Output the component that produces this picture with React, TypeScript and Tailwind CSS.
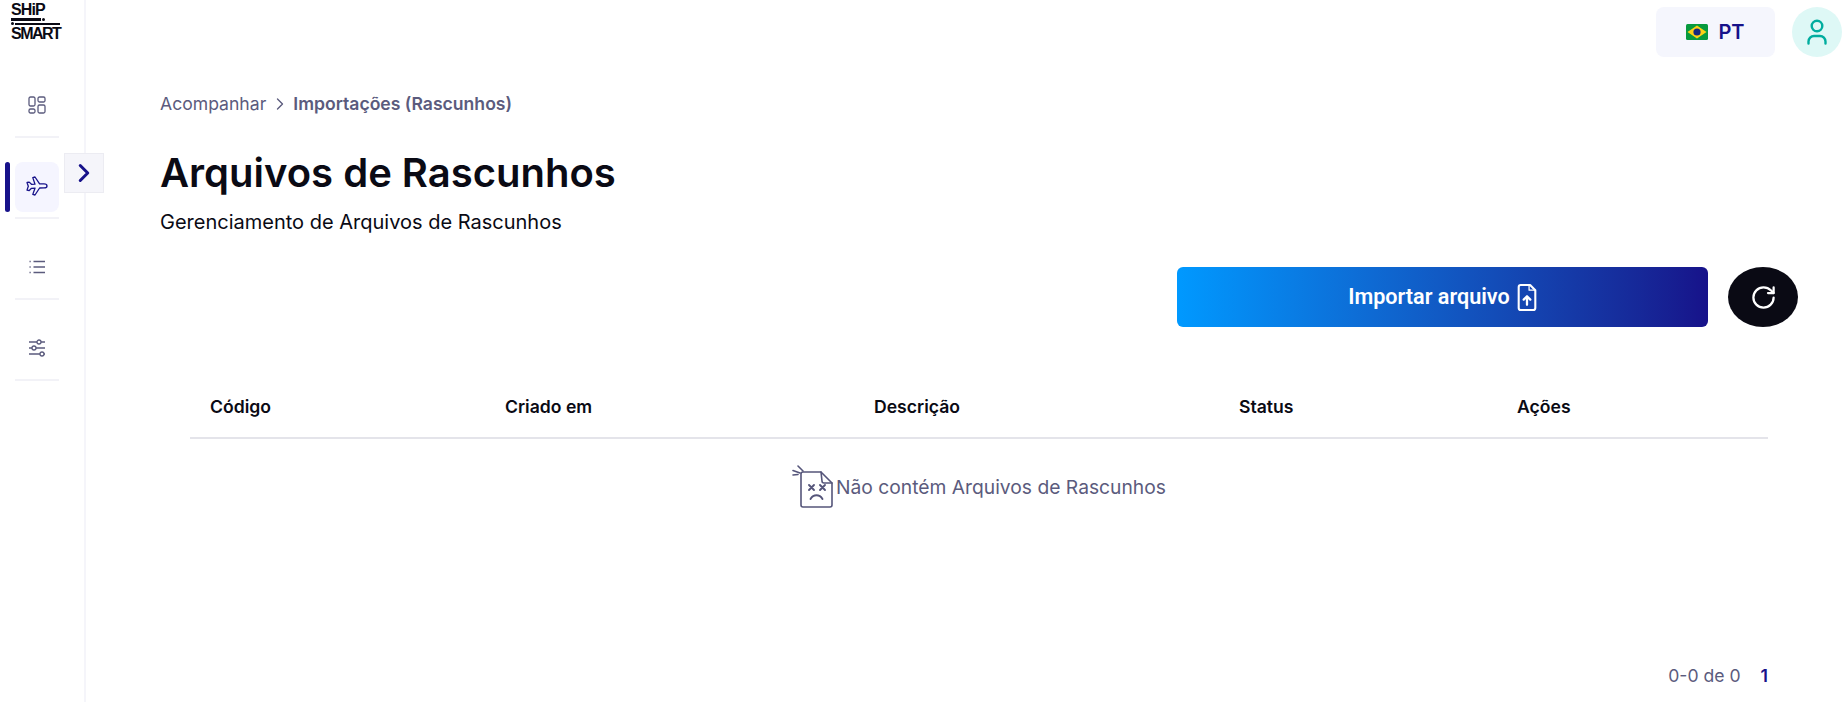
import { ChevronRight, RotateCw } from "lucide-react";

const FONT = { fontFamily: "Inter, sans-serif" };

const COLUMNS = ["Código", "Criado em", "Descrição", "Status", "Ações"];

function Logo() {
  return (
    <div className="flex h-[36px] w-[50px] flex-col font-['Liberation_Sans'] font-bold leading-none text-[#0a0a14]">
      <span className="h-[13px] text-[16px] leading-[13px] tracking-[-0.9px]">SHiP</span>
      <div className="mt-[2px] flex items-center gap-[1px]">
        <div className="h-[3px] w-[30px] bg-[#0a0a14]" />
        <div className="h-[3px] w-[3px] rounded-full bg-[#0a0a14]" />
      </div>
      <div className="mt-[1px] flex items-center gap-[1px]">
        <div className="h-[3px] w-[3px] rounded-full bg-[#0a0a14]" />
        <div className="h-[2px] w-[45px] bg-[#0a0a14]" />
      </div>
      <span className="mt-[2px] h-[13px] text-[16px] leading-[13px] tracking-[-1.5px]">SMART</span>
    </div>
  );
}

function GridIcon() {
  return (
    <svg width="18" height="18" viewBox="0 0 18 18" fill="none" stroke="#5b5b7d" strokeWidth="1.3">
      <rect x="1" y="1" width="6" height="9" rx="1.5" />
      <rect x="10" y="1" width="7" height="5" rx="1.5" />
      <rect x="1" y="13" width="6" height="4" rx="1.5" />
      <rect x="10" y="9" width="7" height="8" rx="1.5" />
    </svg>
  );
}

function PlaneIcon() {
  return (
    <svg width="22" height="20" viewBox="0 0 22 20" fill="none" stroke="#17128a" strokeWidth="1.3" strokeLinejoin="round">
      <path d="M1 6.500l2.200-.4 2.300 2.200 3.500-.1L6.800 1.600 9 1l4.600 6.900 4.400-.1c1.800 0 3 1 3 2.100s-1.200 2-3 2l-4.400.1L9 19l-2.200-.6 2.200-6.200-3.500.1-2.300 2.200-2.200-.4 1.300-3.900z" />
    </svg>
  );
}

function ListIcon() {
  return (
    <svg width="16" height="14" viewBox="0 0 16 14" fill="none" stroke="#5b5b7d" strokeWidth="1.4">
      <path d="M4.500 1.500H16M4.500 7H16M4.500 12.500H16" />
      <path d="M0.500 1.500h1.200M0.500 7h1.200M0.500 12.500h1.200" />
    </svg>
  );
}

function SlidersIcon() {
  return (
    <svg width="18" height="18" viewBox="0 0 18 18" fill="none" stroke="#5b5b7d" strokeWidth="1.3">
      <path d="M1 3h8M13 3h4M1 9h3M8 9h9M1 15h11M16 15h1" />
      <circle cx="11" cy="3" r="2" />
      <circle cx="6" cy="9" r="2" />
      <circle cx="14" cy="15" r="2" />
    </svg>
  );
}

function BrazilFlag() {
  return (
    <svg width="22" height="16" viewBox="0 0 22 16">
      <rect width="22" height="16" rx="1.500" fill="#079a3e" />
      <path d="M11 1.500L20.500 8 11 14.500 1.500 8z" fill="#fcd116" />
      <circle cx="11" cy="8" r="3.600" fill="#15287e" />
    </svg>
  );
}

function UserIcon() {
  return (
    <svg width="20" height="26" viewBox="0 0 20 26" fill="none" stroke="#00ad9f" strokeWidth="2.4" strokeLinecap="round">
      <circle cx="10" cy="7" r="5.300" />
      <path d="M1.500 24.500v-2a5.500 5.500 0 0 1 5.500-5.500h6a5.500 5.500 0 0 1 5.500 5.500v2" />
    </svg>
  );
}

function FileUploadIcon() {
  return (
    <svg width="20" height="27" viewBox="0 0 18 26" fill="none" stroke="#ffffff" strokeWidth="2" strokeLinecap="round" strokeLinejoin="round">
      <path d="M3 1h9l5 5v17a2 2 0 0 1-2 2H3a2 2 0 0 1-2-2V3a2 2 0 0 1 2-2z" />
      <path d="M11 1.500V6h5.500" strokeWidth="1.200" />
      <path d="M9 20v-8M5.800 15L9 11.800 12.200 15" strokeWidth="2.200" />
    </svg>
  );
}

function EmptyFileIcon() {
  return (
    <svg width="42" height="44" viewBox="0 0 42 44" fill="none" stroke="#55557a" strokeWidth="1.6" strokeLinecap="round" strokeLinejoin="round">
      <path d="M11 7h18l11 11v22a2 2 0 0 1-2 2H11a2 2 0 0 1-2-2V9a2 2 0 0 1 2-2z" />
      <path d="M29 7l1 9a2 2 0 0 0 2 2h8" />
      <path d="M6 1l5 5M1 5.500l7 2.500M1 10l5-.5" />
      <path d="M17 20l5 5M22 20l-5 5M28 20l5 5M33 20l-5 5" strokeWidth="1.900" />
      <path d="M18.500 34c3-5 9-5 12 0" strokeWidth="1.900" />
    </svg>
  );
}

function NavItem({ active, children }: { active?: boolean; children: React.ReactNode }) {
  return (
    <div className="relative flex h-[81px] w-[44px] items-end justify-center border-b-[2px] border-[#f2f2f7] pb-[5px]">
      {active && <span className="absolute -left-[10px] top-[24px] h-[50px] w-[5px] rounded-full bg-[#17128a]" />}
      <span className={`flex h-[50px] w-[44px] items-center justify-center rounded-lg pb-[2px] ${active ? "bg-[#f5f5ff]" : ""}`}>
        {children}
      </span>
      {active && (
        <span className="absolute left-[49px] top-[15px] flex h-[40px] w-[40px] items-center justify-center border border-[#ececf2] bg-[#f5f5fa] text-[#17128a]">
          <ChevronRight size={30} strokeWidth={2.4} />
        </span>
      )}
    </div>
  );
}

export default function App() {
  return (
    <div className="flex h-[702px] w-full overflow-hidden bg-white text-[#0a0a14]" style={FONT}>
      <aside className="flex w-[86px] shrink-0 flex-col border-r-[2px] border-[#f5f5fa] pl-[15px]">
        <div className="mt-[3px] -ml-[4px]">
          <Logo />
        </div>
        <nav className="mt-[18px] flex flex-col">
          <NavItem><GridIcon /></NavItem>
          <NavItem active><PlaneIcon /></NavItem>
          <NavItem><ListIcon /></NavItem>
          <NavItem><SlidersIcon /></NavItem>
        </nav>
      </aside>

      <main className="flex min-w-0 flex-1 flex-col">
        <header className="flex items-center justify-end gap-[17px] pt-[7px] pr-[1px]">
          <div className="flex h-[50px] w-[119px] items-center justify-center gap-[10px] rounded-lg bg-[#f5f6fd] text-[20px] font-semibold text-[#17128a]">
            <BrazilFlag />
            PT
          </div>
          <div className="flex h-[50px] w-[50px] items-center justify-center rounded-full bg-[#def8f6]">
            <UserIcon />
          </div>
        </header>

        <div className="mt-[35px] flex items-center pl-[74px] text-[17.6px] leading-[24px] text-[#5b5b7d]">
          <span>Acompanhar</span>
          <ChevronRight size={20} strokeWidth={1.6} className="mx-[3.5px]" />
          <span className="font-semibold">Importações (Rascunhos)</span>
        </div>

        <h1 className="mt-[32px] pl-[74px] text-[40px] leading-[50px] font-semibold text-[#0a0a14]">Arquivos de Rascunhos</h1>
        <p className="mt-[11px] pl-[74px] text-[20px] leading-[26px] text-[#0a0a14]">Gerenciamento de Arquivos de Rascunhos</p>

        <div className="mt-[32px] flex justify-end gap-[20px] pr-[45px]">
          <button className="flex h-[60px] w-[531px] items-center justify-center gap-[7px] rounded-md bg-gradient-to-r from-[#0099ff] to-[#17128a] font-['Roboto'] text-[21.6px] font-semibold text-white">
            Importar arquivo
            <FileUploadIcon />
          </button>
          <button className="flex h-[60px] w-[70px] items-center justify-center rounded-[50%] bg-[#0a0a14] text-white">
            <RotateCw size={27} strokeWidth={2} />
          </button>
        </div>

        <div className="mt-[52px] ml-[104px] mr-[75px]">
          <div className="grid h-[60px] grid-cols-[295px_369px_365px_278px_1fr] items-center border-b-[2px] border-[#e4e4ea] pb-[2px] text-[17.6px] font-semibold text-[#0a0a14]">
            {COLUMNS.map((c) => (
              <span key={c} className="pl-[20px]">{c}</span>
            ))}
          </div>
          <div className="mt-[26px] flex items-center justify-center gap-[2px] text-[19.25px] text-[#5b5b7d]">
            <EmptyFileIcon />
            <span>Não contém Arquivos de Rascunhos</span>
          </div>
        </div>

        <div className="mt-auto flex items-center justify-end gap-[20px] pb-[15px] pr-[75px] text-[17.6px] leading-[22px]">
          <span className="text-[#5b5b7d]">0-0 de 0</span>
          <span className="font-semibold text-[#17128a]">1</span>
        </div>
      </main>
    </div>
  );
}
